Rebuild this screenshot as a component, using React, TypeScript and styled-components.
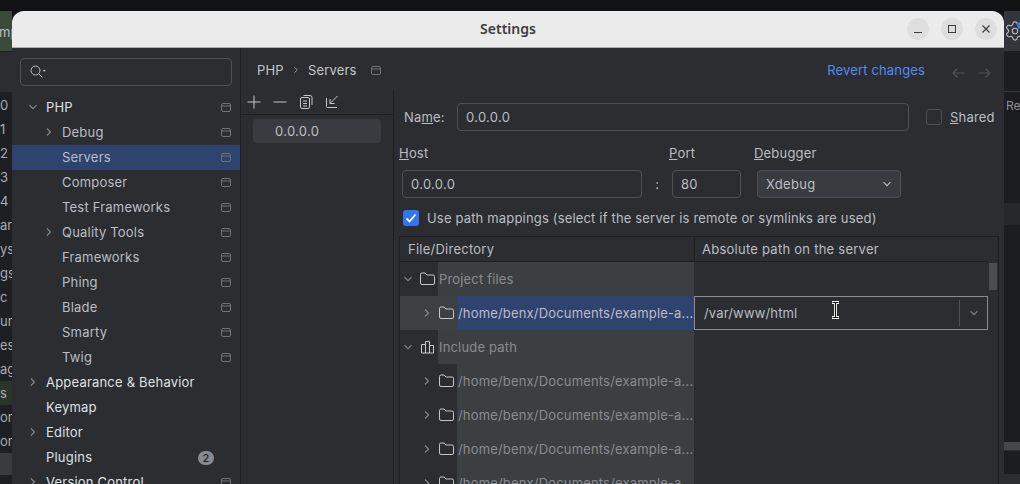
import React from "react";
import styled, { createGlobalStyle } from "styled-components";
import { Settings } from "lucide-react";

const Global = createGlobalStyle`
  html, body { margin: 0; padding: 0; background: #111214; }
  * { box-sizing: border-box; }
`;

const UI = `Inter, "Noto Sans", sans-serif`;

const Page = styled.div`
  width: 1020px; height: 484px; overflow: hidden; display: flex; flex-direction: column;
  background: #111214; font-family: ${UI}; font-size: 13px; color: #bcbec4;
`;
const TopGap = styled.div`height: 11px; flex: none; background: #111214;`;
const Desktop = styled.div`flex: 1; display: flex; min-height: 0;`;

/* IDE behind the dialog */
const BehindLeft = styled.div`
  width: 12px; flex: none; display: flex; flex-direction: column; overflow: hidden; background: #1e1f22;
`;
const LeftTab = styled.div`
  height: 40px; flex: none; background: #3c4a3a; color: #bcbec4; font-size: 13px; line-height: 42px; white-space: nowrap; text-indent: -1px; overflow: hidden;
`;
const LeftBar = styled.div`height: 42px; flex: none; background: #2b2d30; border-top: 1px solid #1e1f22; border-bottom: 1px solid #1e1f22;`;
const LeftLine = styled.div<{ $green?: boolean }>`
  height: 24px; flex: none; line-height: 24px; font-size: 13px; color: #a9abb1; overflow: hidden; white-space: nowrap;
  background: ${(p) => (p.$green ? "#2a3529" : "#1e1f22")};
`;
const LeftBlock = styled.div`height: 22px; flex: none; background: #3a3b3e;`;

const BehindRight = styled.div`
  width: 16px; flex: none; display: flex; flex-direction: column; overflow: hidden; background: #1c1d20;
`;
const RightTab = styled.div`
  height: 40px; flex: none; background: #33353a; display: flex; align-items: center; position: relative;
`;
const BlueDot = styled.span`position: absolute; left: 13px; top: 11px; width: 7px; height: 7px; border-radius: 50%; background: #3574f0;`;
const RightRule = styled.div`height: 41px; flex: none; border-bottom: 1px solid #34363a;`;
const RightText = styled.div`height: 28px; flex: none; padding-left: 2px; line-height: 28px; font-size: 12px; color: #8c8f94; white-space: nowrap; overflow: hidden;`;
const RightGap = styled.div<{ $h: number }>`height: ${(p) => p.$h}px; flex: none;`;
const RightBand = styled.div`height: 22px; flex: none; background: #26282b;`;
const RightSlider = styled.div`height: 9px; flex: none; background: #45474a; border-bottom: 1px solid #2b2d30;`;
const RightFoot = styled.div`flex: 1; background: #2b2d30;`;

/* Settings dialog */
const Dialog = styled.div`
  width: 992px; flex: none; display: flex; flex-direction: column; background: #2b2d30; overflow: hidden;
  border-radius: 12px 12px 0 0;
`;
const TitleBar = styled.div`
  height: 37px; flex: none; background: #ebebeb; border-bottom: 1px solid #aeaeae; position: relative;
  display: flex; align-items: center; justify-content: flex-end; padding: 0 7px 1px 0; gap: 12px;
`;
const Title = styled.div`
  position: absolute; left: 0; right: 0; top: 9px; text-align: center; font: 600 14px/18px "Noto Sans", sans-serif; color: #3d3d3d;
`;
const WinBtn = styled.button`
  width: 22px; height: 22px; border: 0; padding: 0; border-radius: 50%; background: #dedede; display: flex; align-items: center; justify-content: center;
`;
const DialogBody = styled.div`flex: 1; display: flex; min-height: 0;`;

const Sidebar = styled.nav`
  width: 229px; flex: none; border-right: 1px solid #1e1f22; padding-top: 10px; overflow: hidden;
`;
const SearchBox = styled.div`
  height: 28px; margin: 0 8px 9px; border: 1px solid #4e5157; border-radius: 4px; display: flex; align-items: center; padding-left: 9px;
`;
const TreeRow = styled.div<{ $level: number; $selected?: boolean }>`
  height: 25px; display: flex; align-items: center; padding-left: ${(p) => 13 + p.$level * 16}px; padding-right: 9px;
  background: ${(p) => (p.$selected ? "#2e436e" : "transparent")};
  color: ${(p) => (p.$level === 0 ? "#dfe1e5" : "#bcbec4")};
`;
const Arrow = styled.span`width: 16px; height: 16px; flex: none; display: flex; align-items: center; justify-content: center; margin: 0 5px 1px 0;`;
const RowLabel = styled.span`flex: 1; white-space: nowrap; letter-spacing: 0.2px; padding-bottom: 2px;`;
const Badge = styled.span`
  width: 16px; height: 14px; border-radius: 7px; background: #868a91; color: #1e1f22; font-size: 11px; line-height: 14px; text-align: center; margin-right: 17px; font-weight: 500;
`;

const Main = styled.section`flex: 1; min-width: 0; display: flex; flex-direction: column;`;
const Crumbs = styled.header`
  height: 42px; flex: none; display: flex; align-items: center; padding: 2px 13px 0 16px;
`;
const CrumbText = styled.span`color: #c4c7cd; letter-spacing: 0.2px;`;
const CrumbSep = styled.span`width: 24px; display: flex; justify-content: center;`;
const CrumbMark = styled.span`margin-left: 14px; display: flex;`;
const Revert = styled.span`margin-left: auto; color: #548af7; letter-spacing: 0.15px;`;
const Nav = styled.span`margin-left: 27px; display: flex; gap: 13px; padding-top: 6px;`;

const Content = styled.div`flex: 1; display: flex; min-height: 0;`;
const ServerPanel = styled.div`width: 153px; flex: none; border-right: 1px solid #1e1f22;`;
const ToolRow = styled.div`height: 25px; border-bottom: 1px solid #1e1f22; display: flex; align-items: center; padding-left: 5px; gap: 9px;`;
const ServerItem = styled.div`height: 24px; margin: 4px 12px 0; border-radius: 4px; background: #393b40; padding-left: 22px; line-height: 24px; color: #bcbec4; letter-spacing: 0.3px;`;

const Form = styled.div`flex: 1; min-width: 0; padding: 13px 5px 0 5px; overflow: hidden;`;
const NameRow = styled.div`display: flex; align-items: center; margin-left: 5px; height: 28px;`;
const FieldLabel = styled.label`letter-spacing: 0.2px; color: #bcbec4; white-space: nowrap;`;
const NameLabel = styled(FieldLabel)`width: 53px; flex: none;`;
const Input = styled.div<{ $w: number }>`
  width: ${(p) => p.$w}px; height: 28px; flex: none; border: 1px solid #4e5157; border-radius: 4px; padding-left: 8px; line-height: 26px; color: #bcbec4; letter-spacing: 0.3px;
`;
const Box = styled.span<{ $on?: boolean }>`
  width: 16px; height: 16px; flex: none; border-radius: 3px; display: flex; align-items: center; justify-content: center;
  background: ${(p) => (p.$on ? "#3574f0" : "transparent")}; border: ${(p) => (p.$on ? "0" : "1px solid #4e5157")};
`;
const SharedBox = styled(Box)`margin: 0 8px 0 17px;`;
const Fields = styled.div`display: flex; margin: 14px 0 0 3px;`;
const Field = styled.div`display: flex; flex-direction: column; gap: 9px;`;
const TopLabel = styled(FieldLabel)`height: 16px; line-height: 16px; margin-left: -3px;`;
const Colon = styled.div`width: 30px; padding-top: 25px; line-height: 28px; text-align: center; color: #bcbec4;`;
const DebuggerField = styled(Field)`margin-left: 16px;`;
const Select = styled.div`
  width: 144px; height: 28px; border: 1px solid #4e5157; border-radius: 4px; background: #393b40; display: flex; align-items: center; justify-content: space-between; padding: 0 7px 0 8px; color: #bcbec4; letter-spacing: 0.3px;
`;
const CheckRow = styled.div`display: flex; align-items: center; gap: 8px; margin: 12px 0 10px 4px; height: 16px; letter-spacing: 0.17px; white-space: nowrap;`;

const Table = styled.div`
  width: 600px; border: 1px solid #1e1f22; border-bottom: 0; position: relative; height: 300px;
`;
const Header = styled.div`display: flex; height: 25px; width: 588px; border-bottom: 1px solid #1e1f22;`;
const HeadCell = styled.div<{ $first?: boolean }>`
  width: ${(p) => (p.$first ? "295px" : "auto")}; flex: ${(p) => (p.$first ? "none" : "1")}; padding-left: ${(p) => (p.$first ? 8 : 7)}px; line-height: 24px; color: #bcbec4; letter-spacing: 0.25px;
  border-right: ${(p) => (p.$first ? "1px solid #1e1f22" : "0")}; white-space: nowrap;
`;
const Row = styled.div`display: flex; height: 34px;`;
const LeftCell = styled.div<{ $active?: boolean }>`
  width: 294px; flex: none; display: flex; align-items: stretch; background: ${(p) => (p.$active ? "#3d3f43" : "transparent")};
`;
const Gutter = styled.div<{ $level: number }>`
  width: ${(p) => (p.$level ? 57 : 38)}px; flex: none; display: flex; align-items: center; padding-left: ${(p) => (p.$level ? 19 : 0)}px;
`;
const TreeArrow = styled.span`width: 15px; flex: none; display: flex; justify-content: center;`;
const TreeIcon = styled.span`margin-left: 5px; display: flex;`;
const PathCell = styled.div<{ $active?: boolean }>`
  flex: 1; min-width: 0; background: ${(p) => (p.$active ? "#2e436e" : "#3c3f41")};
  color: ${(p) => (p.$active ? "#bcbec4" : "#888b91")}; line-height: 34px; padding-left: 1px; white-space: nowrap; overflow: hidden; letter-spacing: 0.17px;
`;
const Editor = styled.div`
  width: 294px; flex: none; border: 1px solid #8b8c8e; display: flex; align-items: center; position: relative; padding-left: 9px; color: #bcbec4; letter-spacing: 0.15px;
`;
const EditorDrop = styled.span`
  position: absolute; right: 0; top: 3px; bottom: 3px; width: 28px; border-left: 1px solid #4e5157; display: flex; align-items: center; justify-content: center;
`;
const Caret = styled.span`position: absolute; left: 136px; top: 4px; display: flex;`;
const Scroll = styled.div`position: absolute; right: 1px; top: 26px; width: 8px; height: 27px; background: #4a4c50;`;

const Chevron = ({ dir, c = "#868a91", s = 12 }: { dir: "r" | "d"; c?: string; s?: number }) => (
  <svg width={s} height={s} viewBox="0 0 12 12" fill="none" stroke={c} strokeWidth="1.1">
    {dir === "r" ? <path d="M4 2.5 7.5 6 4 9.500" /> : <path d="M2.500 4.200 6 7.700 9.500 4.200" />}
  </svg>
);
const Mark = () => (
  <svg width="10" height="9" viewBox="0 0 10 9" fill="none" stroke="#6f737a">
    <rect x=".5" y=".5" width="9" height="8" rx="1.5" />
    <path d="M.5 3H9.500" />
  </svg>
);
const Folder = () => (
  <svg width="15" height="14" viewBox="0 0 15 14" fill="none" stroke="#c5c7cc" strokeWidth="1">
    <path d="M.5 2.500a1.500 1.500 0 0 1 1.500-1.500h3.200l1.600 2H13a1.500 1.500 0 0 1 1.500 1.500v6.500a1.500 1.500 0 0 1-1.500 1.500H2a1.500 1.500 0 0 1-1.500-1.500Z" />
  </svg>
);
const Library = () => (
  <svg width="15" height="14" viewBox="0 0 15 14" fill="none" stroke="#c5c7cc" strokeWidth="1">
    <path d="M1.500 4.500h4V13h-4zM5.500 1.500h4V13h-4zM9.500 5.500h4V13h-4z" />
  </svg>
);

const Tools = () => (
  <>
    <svg width="16" height="16" viewBox="0 0 16 16" fill="none" stroke="#c5c7cc"><path d="M8 1.500v13M1.500 8h13" /></svg>
    <svg width="18" height="16" viewBox="0 0 18 16" fill="none" stroke="#c5c7cc"><path d="M2.500 8h13" /></svg>
    <svg width="16" height="16" viewBox="0 0 16 16" fill="none" stroke="#c5c7cc">
      <rect x="2.500" y="3.500" width="9" height="11" rx="1.500" />
      <path d="M5.500 1.500H12a2 2 0 0 1 2 2V11M5 7h4M5 9.500h4M5 12h4" />
    </svg>
    <svg width="16" height="16" viewBox="0 0 16 16" fill="none" stroke="#c5c7cc" style={{ marginLeft: 1 }}>
      <path d="M2.500 4v8.500a1 1 0 0 0 1 1H13M13.500 2 6 9.500M6 5v4.500h4.500" />
    </svg>
  </>
);

type Item = { label: string; level: number; arrow?: "r" | "d"; selected?: boolean; mark?: boolean; badge?: string };
const items: Item[] = [
  { label: "PHP", level: 0, arrow: "d", mark: true },
  { label: "Debug", level: 1, arrow: "r", mark: true },
  { label: "Servers", level: 1, selected: true, mark: true },
  { label: "Composer", level: 1, mark: true },
  { label: "Test Frameworks", level: 1, mark: true },
  { label: "Quality Tools", level: 1, arrow: "r", mark: true },
  { label: "Frameworks", level: 1, mark: true },
  { label: "Phing", level: 1, mark: true },
  { label: "Blade", level: 1, mark: true },
  { label: "Smarty", level: 1, mark: true },
  { label: "Twig", level: 1, mark: true },
  { label: "Appearance & Behavior", level: 0, arrow: "r" },
  { label: "Keymap", level: 0 },
  { label: "Editor", level: 0, arrow: "r" },
  { label: "Plugins", level: 0, badge: "2" },
  { label: "Version Control", level: 0, arrow: "r", mark: true },
];

const leftLines: [string, boolean?][] = [
  ["0"], ["1"], ["2"], ["3"], ["4"], ["ar"], ["ys"], ["gs"], ["c"], ["ur"], ["es"], ["ag"], ["s", true], ["or"], ["or"],
];
const path = "/home/benx/Documents/example-a...";

export default function App() {
  return (
    <Page>
      <Global />
      <TopGap />
      <Desktop>
        <BehindLeft>
          <LeftTab>mp</LeftTab>
          <LeftBar />
          {leftLines.map(([t, g], i) => (
            <LeftLine key={i} $green={g}>{t}</LeftLine>
          ))}
          <LeftBlock />
        </BehindLeft>
        <Dialog>
          <TitleBar>
            <Title>Settings</Title>
            <WinBtn aria-label="Minimize">
              <svg width="10" height="10" viewBox="0 0 10 10"><path d="M1 8.500h8" stroke="#3d3d3d" strokeWidth="1" /></svg>
            </WinBtn>
            <WinBtn aria-label="Maximize">
              <svg width="10" height="10" viewBox="0 0 10 10" fill="none"><rect x="1.500" y="1.500" width="7" height="7" stroke="#3d3d3d" /></svg>
            </WinBtn>
            <WinBtn aria-label="Close">
              <svg width="10" height="10" viewBox="0 0 10 10"><path d="M1.500 1.500l7 7M8.500 1.500l-7 7" stroke="#3d3d3d" strokeWidth="1.200" /></svg>
            </WinBtn>
          </TitleBar>
          <DialogBody>
            <Sidebar>
              <SearchBox>
                <svg width="18" height="14" viewBox="0 0 18 14" fill="none" stroke="#bcbec4">
                  <circle cx="5.500" cy="5.500" r="4.500" /><path d="M9 9l3.500 3.500" />
                  <path d="M12.500 5h3.500l-1.750 1.800z" fill="#bcbec4" stroke="none" />
                </svg>
              </SearchBox>
              {items.map((it) => (
                <TreeRow key={it.label} $level={it.level} $selected={it.selected}>
                  <Arrow>{it.arrow && <Chevron dir={it.arrow} />}</Arrow>
                  <RowLabel>{it.label}</RowLabel>
                  {it.badge && <Badge>{it.badge}</Badge>}
                  {it.mark && <Mark />}
                </TreeRow>
              ))}
            </Sidebar>
            <Main>
              <Crumbs>
                <CrumbText>PHP</CrumbText>
                <CrumbSep><Chevron dir="r" c="#9da0a8" s={10} /></CrumbSep>
                <CrumbText>Servers</CrumbText>
                <CrumbMark><Mark /></CrumbMark>
                <Revert>Revert changes</Revert>
                <Nav>
                  <svg width="13" height="12" viewBox="0 0 13 12" fill="none" stroke="#4f5257" strokeWidth="1.200"><path d="M12.500 6H1M5.500 1.500 1 6l4.500 4.500" /></svg>
                  <svg width="13" height="12" viewBox="0 0 13 12" fill="none" stroke="#4f5257" strokeWidth="1.200"><path d="M.5 6H12M7.500 1.500 12 6l-4.500 4.500" /></svg>
                </Nav>
              </Crumbs>
              <Content>
                <ServerPanel>
                  <ToolRow><Tools /></ToolRow>
                  <ServerItem>0.0.0.0</ServerItem>
                </ServerPanel>
                <Form>
                  <NameRow>
                    <NameLabel>Na<u>m</u>e:</NameLabel>
                    <Input $w={452}>0.0.0.0</Input>
                    <SharedBox />
                    <FieldLabel><u>S</u>hared</FieldLabel>
                  </NameRow>
                  <Fields>
                    <Field>
                      <TopLabel><u>H</u>ost</TopLabel>
                      <Input $w={240}>0.0.0.0</Input>
                    </Field>
                    <Colon>:</Colon>
                    <Field>
                      <TopLabel><u>P</u>ort</TopLabel>
                      <Input $w={69}>80</Input>
                    </Field>
                    <DebuggerField>
                      <TopLabel><u>D</u>ebugger</TopLabel>
                      <Select>Xdebug<Chevron dir="d" c="#bcbec4" /></Select>
                    </DebuggerField>
                  </Fields>
                  <CheckRow>
                    <Box $on>
                      <svg width="12" height="12" viewBox="0 0 12 12" fill="none" stroke="#fff" strokeWidth="1.800"><path d="M1.500 6.500 4.500 9.500 10.500 2.500" /></svg>
                    </Box>
                    Use path mappings (select if the server is remote or symlinks are used)
                  </CheckRow>
                  <Table>
                    <Header>
                      <HeadCell $first>File/Directory</HeadCell>
                      <HeadCell>Absolute path on the server</HeadCell>
                    </Header>
                    <Row>
                      <LeftCell>
                        <Gutter $level={0}>
                          <TreeArrow><Chevron dir="d" /></TreeArrow>
                          <TreeIcon><Folder /></TreeIcon>
                        </Gutter>
                        <PathCell>Project files</PathCell>
                      </LeftCell>
                    </Row>
                    <Row>
                      <LeftCell $active>
                        <Gutter $level={1}>
                          <TreeArrow><Chevron dir="r" /></TreeArrow>
                          <TreeIcon><Folder /></TreeIcon>
                        </Gutter>
                        <PathCell $active>{path}</PathCell>
                      </LeftCell>
                      <Editor>
                        /var/www/html
                        <Caret>
                          <svg width="9" height="18" viewBox="0 0 9 18" fill="none">
                            <path d="M1 1.500h7M1 16.500h7M4.500 1.500v15" stroke="#fff" strokeWidth="3" />
                            <path d="M1.500 1.500h6M1.500 16.500h6M4.500 2v14" stroke="#111" strokeWidth="1.200" />
                          </svg>
                        </Caret>
                        <EditorDrop><Chevron dir="d" /></EditorDrop>
                      </Editor>
                    </Row>
                    <Row>
                      <LeftCell>
                        <Gutter $level={0}>
                          <TreeArrow><Chevron dir="d" /></TreeArrow>
                          <TreeIcon><Library /></TreeIcon>
                        </Gutter>
                        <PathCell>Include path</PathCell>
                      </LeftCell>
                    </Row>
                    {[0, 1, 2, 3].map((i) => (
                      <Row key={i}>
                        <LeftCell>
                          <Gutter $level={1}>
                            <TreeArrow><Chevron dir="r" /></TreeArrow>
                            <TreeIcon><Folder /></TreeIcon>
                          </Gutter>
                          <PathCell>{path}</PathCell>
                        </LeftCell>
                      </Row>
                    ))}
                    <Scroll />
                  </Table>
                </Form>
              </Content>
            </Main>
          </DialogBody>
        </Dialog>
        <BehindRight>
          <RightTab>
            <Settings size={22} color="#bcbec4" strokeWidth={1.2} style={{ flex: "none" }} />
            <BlueDot />
          </RightTab>
          <RightRule />
          <RightText>Re</RightText>
          <RightGap $h={83} />
          <RightBand />
          <RightGap $h={217} />
          <RightSlider />
          <RightGap $h={23} />
          <RightFoot />
        </BehindRight>
      </Desktop>
    </Page>
  );
}
